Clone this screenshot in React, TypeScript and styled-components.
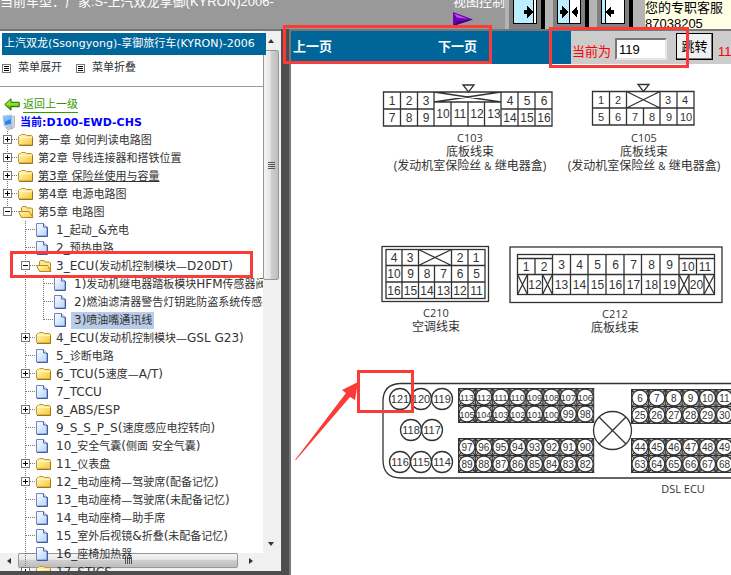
import React from "react";
import styled, { createGlobalStyle } from "styled-components";

const UI_FONT = `"Liberation Sans", "Noto Sans CJK SC", sans-serif`;
const TREE_FONT = `"DejaVu Sans", "Noto Sans CJK SC", sans-serif`;
const RED = "#fb3b37";

const GlobalStyle = createGlobalStyle`
  * { box-sizing: border-box; }
  body { margin: 0; overflow: hidden; background: #4d4d4d; font-family: ${UI_FONT}; }
  a { color: inherit; text-decoration: none; }
  button, input { font-family: inherit; }
  svg { display: block; flex: none; }
`;

const Page = styled.div`
  position: relative;
  display: grid;
  grid-template-rows: 29px minmax(0, 1fr);
  height: 100vh;
  overflow: hidden;
`;

/* ---------- top strip ---------- */

const TopBar = styled.header`
  display: flex;
  background: #999;
  color: #fff;
  font-size: 13px;
  line-height: 16px;
  overflow: hidden;
  white-space: nowrap;
`;

const CarModel = styled.div`
  flex: none;
  width: 453px;
  margin-top: -6px;
`;

const ViewControl = styled.div`
  flex: none;
  width: 52px;
  margin-top: -6px;
`;

const ControlLabel = styled.div`
  height: 18px;
`;

const ControlButtons = styled.div`
  display: grid;
  grid-template-columns: 36px 36px 36px;
  column-gap: 8px;
  flex: none;
  width: 140px;
  padding-left: 4px;
  background: #b4b4b4;
`;

const FrameButton = styled.button`
  height: 29px;
  padding: 0 0 5px;
  border: 0;
  border-right: 4px solid #000;
  background: #808080;
  display: flex;
  align-items: flex-end;
  justify-content: center;
`;

const Contact = styled.div`
  flex: 1;
  min-width: 0;
  overflow: hidden;
  background: #ffffe6;
  color: #000;
`;

/* ---------- sidebar ---------- */

const Main = styled.div`
  display: grid;
  grid-template-columns: 281px minmax(0, 1fr);
  column-gap: 8px;
  min-height: 0;
`;

const Sidebar = styled.nav`
  display: grid;
  grid-template-columns: minmax(0, 1fr) 18px;
  grid-template-rows: minmax(0, 1fr) 18px;
  min-height: 0;
  margin-bottom: 4px;
  border-top: 2px solid #777;
  background: #fff;
  font: 11px/18px ${TREE_FONT};
  color: #333;
  overflow: hidden;
`;

const SideContent = styled.div`
  grid-area: 1 / 1 / 3 / 2;
  z-index: 1;
  min-height: 0;
  white-space: nowrap;
`;

const SideTitle = styled.h1`
  width: 264px;
  margin: 2px 0 0 2px;
  padding: 0 2px;
  overflow: hidden;
  background: #069;
  color: #fff;
  font-size: 11px;
  font-weight: normal;
  line-height: 22px;
`;

const MenuTools = styled.div`
  display: flex;
  gap: 14px;
  padding: 4px 2px 9px;
  margin-bottom: 8px;
  border-bottom: 1px solid #999;
`;

const MenuTool = styled.button`
  display: flex;
  align-items: center;
  gap: 7px;
  padding: 0;
  border: 0;
  background: none;
  color: #333;
  font-size: 11px;
  line-height: 18px;
`;

const BackRow = styled.div`
  display: flex;
  align-items: center;
  gap: 3px;
  height: 19px;
  padding-left: 4px;
  color: #390;
`;

const BackLink = styled.a`
  line-height: 15px;
  border-bottom: 1px solid #390;
`;

const CurrentRow = styled.div`
  display: flex;
  align-items: center;
  gap: 4px;
  height: 17px;
  padding-left: 2px;
  color: #00f;
  font-weight: bold;
`;

const Tree = styled.ul`
  margin: 0;
  padding: 0;
  list-style: none;
  overflow: hidden;
`;

const TreeRow = styled.li`
  display: flex;
  height: 18px;
`;

const TreeLabel = styled.a<{ $selected?: boolean; $underlined?: boolean }>`
  height: 17px;
  margin: 1px 0 0 1px;
  padding: 0 2px 0 3px;
  line-height: 17px;
  background: ${(p) => (p.$selected ? "#b8cbe8" : "transparent")};
  text-decoration: ${(p) => (p.$underlined ? "underline" : "none")};
`;

const Latin = styled.span`
  font-size: 12px;
`;

const VScroll = styled.div`
  grid-area: 1 / 2 / 2 / 3;
  display: grid;
  grid-template-rows: 19px 230px minmax(0, 1fr) 19px;
  padding-right: 2px;
  background: #f0f0f0;
`;

const HScroll = styled.div`
  grid-area: 2 / 1 / 3 / 2;
  display: grid;
  grid-template-columns: 18px minmax(0, 1fr) 25px;
  padding-bottom: 3px;
  background: #f0f0f0;
`;

const Corner = styled.div`
  grid-area: 2 / 2 / 3 / 3;
  background: #f0f0f0;
`;

const ScrollArrow = styled.div`
  display: flex;
  align-items: center;
  justify-content: center;
`;

const Thumb = styled.div<{ $vertical?: boolean }>`
  display: flex;
  align-items: center;
  justify-content: center;
  border: 1px solid #979797;
  border-radius: 2px;
  background: linear-gradient(${(p) => (p.$vertical ? "to right" : "to bottom")}, #f4f4f4, #e6e6e6 45%, #cfcfcf 50%, #bdbdbd);
`;

/* ---------- viewer ---------- */

const Viewer = styled.main`
  display: flex;
  flex-direction: column;
  min-height: 0;
  border-left: 2px solid #777;
  border-top: 2px solid #777;
  background: #fff;
`;

const PageBar = styled.div`
  display: flex;
  height: 33px;
  background: #069;
  color: #fff;
  font-size: 13px;
  overflow: hidden;
`;

const PageLinks = styled.div`
  display: flex;
  flex: none;
  width: 280px;
  gap: 106px;
  padding-left: 2px;
  line-height: 31px;
  font-weight: bold;
`;

const JumpForm = styled.form`
  display: flex;
  flex: 1;
  min-width: 0;
  padding: 2px 0 0 1px;
  background: #ccc;
  color: #f00;
  white-space: nowrap;
`;

const JumpLabel = styled.label`
  flex: none;
  width: 43px;
  padding-top: 5px;
  line-height: 27px;
`;

const JumpInput = styled.input`
  flex: none;
  width: 52px;
  height: 22px;
  margin: 5px 9px 0 0;
  padding: 0 2px;
  border: 2px solid;
  border-color: #777 #e6e6e6 #e6e6e6 #777;
  border-radius: 0;
  background: #fff;
  font-size: 13px;
`;

const JumpButton = styled.button`
  flex: none;
  width: 37px;
  height: 27px;
  margin-right: 5px;
  padding: 0 0 3px;
  border: 1px solid #000;
  border-radius: 0;
  background: #f0f0f0;
  box-shadow: inset -1px -1px 0 #777;
  color: #000;
  font-size: 13px;
`;

const PageTotal = styled.span`
  padding-top: 5px;
  line-height: 27px;
`;

const Sheet = styled.div`
  flex: 1;
  min-height: 0;
  overflow: hidden;
`;

/* ---------- markup drawn over the page ---------- */

const Mark = styled.div<{ $x: number; $y: number; $w: number; $h: number }>`
  position: absolute;
  z-index: 2;
  left: ${(p) => p.$x}px;
  top: ${(p) => p.$y}px;
  width: ${(p) => p.$w}px;
  height: ${(p) => p.$h}px;
  border: 3px solid ${RED};
  pointer-events: none;
`;

const MarkArrow = styled.svg`
  position: absolute;
  z-index: 2;
  left: 294px;
  top: 380px;
  pointer-events: none;
`;

/* ---------- icons ---------- */

const ListIcon = () => (
  <svg width="9" height="9" viewBox="0 0 9 9" shapeRendering="crispEdges">
    <rect x=".5" y=".5" width="8" height="8" fill="#fff" stroke="#777" />
    <path d="M2 2.5h5M2 4.5h5M2 6.5h5" stroke="#000" />
  </svg>
);

const BackIcon = () => (
  <svg width="16" height="13" viewBox="0 0 16 13">
    <defs>
      <linearGradient id="back" x1="0" y1="0" x2="0" y2="1">
        <stop offset="0" stopColor="#c6f03a" />
        <stop offset=".5" stopColor="#8be01c" />
        <stop offset="1" stopColor="#1f8a00" />
      </linearGradient>
    </defs>
    <path d="M.8 6.5 7 .8v3.5h8.2v4.4H7v3.5Z" fill="url(#back)" stroke="#176800" />
  </svg>
);

const ComputerIcon = () => (
  <svg width="14" height="17" viewBox="0 0 14 17">
    <path d="M9 3l3.5-1v11L9 15Z" fill="#d5dae2" stroke="#8f98a8" strokeWidth=".6" />
    <path d="M1 2l8.5-1 .8 10-8 1Z" fill="#cfe0f5" stroke="#7da0cc" strokeWidth=".6" />
    <path d="M2 3l6.6-.8.6 7.9-6.2.8Z" fill="#2f80e6" />
    <path d="M2 3l6.6-.8.2 2.6L2.4 8Z" fill="#7cc0ff" />
    <path d="M3.5 13.5l5-1.5 2.5 2-5 2Z" fill="#c9cfd8" stroke="#8f98a8" strokeWidth=".6" />
  </svg>
);

const Folder = ({ open }: { open?: boolean }) => (
  <svg width="16" height="18" viewBox="0 0 16 18">
    <defs>
      <linearGradient id="fold" x1="0" y1="0" x2="1" y2="1">
        <stop offset="0" stopColor="#fffbd0" />
        <stop offset="1" stopColor="#f6c62c" />
      </linearGradient>
    </defs>
    {open ? (
      <>
        <path d="M3.5 14V4.5l1-1h3.5l1 1.5h4.5l1 1V13Z" fill="#fbe88c" stroke="#b98a1c" />
        <path d="M3.5 14.5.5 8.5h11l3.5 6Z" fill="url(#fold)" stroke="#b98a1c" />
      </>
    ) : (
      <>
        <path d="M.5 13V5.5l1-1h1l1-1h4l1 1h5l1 1V14h-13Z" fill="url(#fold)" stroke="#c0952b" />
        <path d="M1.5 6.5h12" stroke="#fff8bf" />
        <path d="M1 14.5h13.5V7" fill="none" stroke="#9a7420" />
      </>
    )}
  </svg>
);

const FilePage = () => (
  <svg width="16" height="18" viewBox="0 0 16 18">
    <defs>
      <linearGradient id="sheet" x1="0" y1="0" x2="1" y2="1">
        <stop offset="0" stopColor="#fff" />
        <stop offset="1" stopColor="#b4d2fa" />
      </linearGradient>
    </defs>
    <path d="M.5 2.5h7l3.5 3.5v9H.5Z" fill="url(#sheet)" stroke="#6c88c4" />
    <path d="M7.5 2.5V6H11" fill="#e6f0ff" stroke="#4b66b0" />
    <path d="M1 15.5h10.5V6" fill="none" stroke="#44589c" />
  </svg>
);

type Guide = "none" | "line" | "tee" | "elbow" | "plus" | "minus" | "minusEnd";

const GuideCell = ({ kind }: { kind: Guide }) => {
  const box = kind === "plus" || kind === "minus" || kind === "minusEnd";
  const ends = kind === "elbow" || kind === "minusEnd";
  return (
    <svg width="18" height="18" viewBox="0 0 18 18" shapeRendering="crispEdges">
      {kind !== "none" && <path d={`M7.5 0V${ends ? 9 : 18}`} stroke="#777" strokeDasharray="1 1" />}
      {kind !== "none" && kind !== "line" && <path d="M8 8.5H18" stroke="#777" strokeDasharray="1 1" />}
      {box && <rect x="3.5" y="4.5" width="8" height="8" fill="#fff" stroke="#777" />}
      {box && <path d="M5 8.5h5" stroke="#000" />}
      {kind === "plus" && <path d="M7.5 6v5" stroke="#000" />}
    </svg>
  );
};

const Caret = ({ d }: { d: string }) => (
  <svg width="8" height="8" viewBox="0 0 8 8">
    <path d={d} fill="#333" />
  </svg>
);

const Grip = ({ d }: { d: string }) => (
  <svg width="9" height="9" viewBox="0 0 9 9" shapeRendering="crispEdges">
    <path d={d} stroke="#555" />
  </svg>
);

const FrameIcon = ({ side }: { side: "left" | "both" | "right" }) => (
  <svg width="24" height="24" viewBox="0 0 24 24" shapeRendering="crispEdges">
    <rect x=".5" y="-2" width="23" height="25.5" fill="#fff" stroke="#000" />
    {side === "left" && (
      <>
        <path d="M1 0h19v23H1Z" fill="#bdeeff" />
        <path d="M20.5 0v23" stroke="#000" />
        <path d="M11 10h3V6l6 6-6 6v-4h-3Z" fill="#000" />
      </>
    )}
    {side === "both" && (
      <>
        <path d="M1 0h11v23H1Z" fill="#bdeeff" />
        <path d="M12.5 0v23" stroke="#000" />
        <path d="M3 10h2V6l6 6-6 6v-4H3Zm18 0h-1V6l-6 6 6 6v-4h1Z" fill="#000" />
      </>
    )}
    {side === "right" && (
      <>
        <path d="M1 0h3v23H1Z" fill="#bdeeff" />
        <path d="M4.5 0v23" stroke="#000" />
        <path d="M13 10h-3V6l-5 6 5 6v-4h3Z" fill="#000" />
      </>
    )}
  </svg>
);

const PurpleArrow = () => (
  <svg width="20" height="15" viewBox="0 0 20 15">
    <path d="M0 0 20 7.5 0 14Z" fill="#6f00b4" />
    <path d="M1 1.5 15 7 4 5.5Z" fill="#b45ce8" />
    <path d="M0 14 20 7.5 4 9.5Z" fill="#43007c" />
  </svg>
);

/* ---------- tree data ---------- */

type Node = {
  text: string;
  guides: Guide[];
  icon: "folder" | "open" | "page";
  selected?: boolean;
  underlined?: boolean;
};

const nodes: Node[] = [
  { text: "第一章 如何判读电路图", guides: ["plus"], icon: "folder" },
  { text: "第2章 导线连接器和搭铁位置", guides: ["plus"], icon: "folder" },
  { text: "第3章 保险丝使用与容量", guides: ["plus"], icon: "folder", underlined: true },
  { text: "第4章 电源电路图", guides: ["plus"], icon: "folder" },
  { text: "第5章 电路图", guides: ["minusEnd"], icon: "open" },
  { text: "1_起动_&充电", guides: ["none", "tee"], icon: "page" },
  { text: "2_预热电路", guides: ["none", "tee"], icon: "page" },
  { text: "3_ECU(发动机控制模块—D20DT)", guides: ["none", "minus"], icon: "open" },
  { text: "1)发动机继电器踏板模块HFM传感器阀", guides: ["none", "line", "tee"], icon: "page" },
  { text: "2)燃油滤清器警告灯钥匙防盗系统传感器", guides: ["none", "line", "tee"], icon: "page" },
  { text: "3)喷油嘴通讯线", guides: ["none", "line", "elbow"], icon: "page", selected: true },
  { text: "4_ECU(发动机控制模块—GSL G23)", guides: ["none", "plus"], icon: "folder" },
  { text: "5_诊断电路", guides: ["none", "tee"], icon: "page" },
  { text: "6_TCU(5速度—A/T)", guides: ["none", "plus"], icon: "folder" },
  { text: "7_TCCU", guides: ["none", "tee"], icon: "page" },
  { text: "8_ABS/ESP", guides: ["none", "plus"], icon: "folder" },
  { text: "9_S_S_P_S(速度感应电控转向)", guides: ["none", "tee"], icon: "page" },
  { text: "10_安全气囊(侧面 安全气囊)", guides: ["none", "tee"], icon: "page" },
  { text: "11_仪表盘", guides: ["none", "plus"], icon: "folder" },
  { text: "12_电动座椅—驾驶席(配备记忆)", guides: ["none", "plus"], icon: "folder" },
  { text: "13_电动座椅—驾驶席(未配备记忆)", guides: ["none", "tee"], icon: "page" },
  { text: "14_电动座椅—助手席", guides: ["none", "tee"], icon: "page" },
  { text: "15_室外后视镜&折叠(未配备记忆)", guides: ["none", "tee"], icon: "page" },
  { text: "16_座椅加热器", guides: ["none", "tee"], icon: "page" },
  { text: "17_STICS", guides: ["none", "plus"], icon: "folder" },
];

/* Latin runs are set one size larger than the Chinese ones. */
const Mixed = ({ text }: { text: string }) => (
  <>
    {text.split(/([\x20-\x7e]+)/).map((part, i) =>
      i % 2 ? <Latin key={i}>{part}</Latin> : part
    )}
  </>
);

/* ---------- wiring sheet ---------- */

const Drawing = styled.svg`
  fill: none;
  stroke: #333;
  text { fill: #333; stroke: none; text-anchor: middle; font-family: "Liberation Sans", sans-serif; }
`;

const CaptionText = styled.text`
  && { font-family: "Open Sans", "Noto Sans CJK SC", sans-serif; }
`;

type Pin = [number, number, number | string];

const Pins = ({ items, size = 12 }: { items: Pin[]; size?: number }) => (
  <>
    {items.map(([x, y, n]) => (
      <text key={n} x={x} y={y} fontSize={size}>{n}</text>
    ))}
  </>
);

const row = (labels: number[], x: number, step: number, y: number): Pin[] =>
  labels.map((n, i) => [x + step * i, y, n]);

const range = (from: number, to: number) =>
  Array.from({ length: Math.abs(to - from) + 1 }, (_, i) => (from < to ? from + i : from - i));

const Caption = ({ x, y, lines }: { x: number; y: number; lines: string[] }) => (
  <g>
    {lines.map((line, i) => (
      <CaptionText key={line} x={x} y={y + i * 14} fontSize={i === 0 ? 11 : 12}>
        {line.split("&").map((part, j) => (
          <React.Fragment key={j}>
            {j > 0 && <tspan fontSize="10">&amp;</tspan>}
            {part}
          </React.Fragment>
        ))}
      </CaptionText>
    ))}
  </g>
);

const Bank = ({ x, y, rows }: { x: number; y: number; rows: number[][] }) => {
  const s = 16.9;
  return (
    <g>
      <rect x={x} y={y} width={s * rows[0].length} height={34} fill="#a8a8a8" />
      {rows[0].map((n, i) => (
        <path
          key={n}
          d={`M${x + s * i} ${y}v34M${x + s * i} ${y}l${s} 17l${-s} 17M${x + s * (i + 1)} ${y}l${-s} 17l${s} 17M${x + s * i} ${y}l${s} 34m0-34l${-s} 34`}
        />
      ))}
      <path d={`M${x} ${y + 17}h${s * rows[0].length}`} />
      {rows.map((r, j) =>
        r.map((n, i) => (
          <g key={n}>
            <circle cx={x + s * (i + 0.5)} cy={y + 8.5 + j * 17} r="8" fill="#fff" strokeWidth="1.3" />
            <text x={x + s * (i + 0.5)} y={y + 12 + j * 17} fontSize={n > 99 ? 9 : 10}>{n}</text>
          </g>
        ))
      )}
    </g>
  );
};

const bigPins: Pin[] = [
  [400, 399, 121], [421, 399, 120], [442, 399, 119],
  [411, 430, 118], [432, 430, 117],
  [400, 462, 116], [421, 462, 115], [442, 462, 114],
];

const WiringSheet = () => (
  <Drawing width="440" height="511" viewBox="291 64 440 511" role="img" aria-label="DSL ECU">
    <g strokeWidth="1.3">
      <path d="M383.5 92H552v34H383.5ZM383.5 109H434M501 109h51M400.5 92v34M417.5 92v34M434 92v34M501 92v34M518 92v34M535 92v34M434 102h67M451 102v24M468 102v24M484.5 102v24M434 92l67 10M501 92l-67 10" />
      <path d="M463 85h11l-5.5 7Z" />
      <path d="M592.5 91.5H694V125H592.5ZM592.5 108H694M609.5 91.5V125M626.5 91.5V125M643.5 108v17M660 91.5V125M677 91.5V125M626.5 91.5 660 108M660 91.5 626.5 108" />
      <path d="M638 84.5h11l-5.5 7Z" />
    </g>
    <Pins items={[...row([1, 2, 3], 392, 17, 105), ...row([4, 5, 6], 510, 17, 105), ...row([7, 8, 9], 392, 17, 122), ...row([10, 11, 12, 13], 443, 17, 118), ...row([14, 15, 16], 510, 17, 122)]} />
    <Pins size={11} items={[[601, 104, 1], [618, 104, 2], [668, 104, 3], [685, 104, 4], ...row([5, 6, 7, 8, 9, 10], 601, 17, 121)]} />
    <Caption x={470} y={142} lines={["C103", "底板线束", "(发动机室保险丝 & 继电器盒)"]} />
    <Caption x={644} y={142} lines={["C105", "底板线束", "(发动机室保险丝 & 继电器盒)"]} />

    <g strokeWidth="1.3">
      <rect x="382" y="246.5" width="106.5" height="55" />
      <rect x="386" y="249.5" width="99" height="49" />
      <path d="M386 265.5h99M386 282h99M402 249.5v49M418.5 249.5v49M434.5 265.5v33M451.5 249.5v49M468 249.5v49M418.5 249.5l33 16M451.5 249.5l-33 16" />
      <rect x="510" y="247" width="212" height="55.5" />
      <rect x="517.5" y="254.5" width="197" height="40" />
      <path d="M517.5 274.5h197M517.5 258.5h35M679 258.5h35.5M535 258.5v16M552.5 254.5v40M570.5 254.5v40M588 254.5v40M606 254.5v40M624 254.5v40M641.5 254.5v40M660 254.5v40M679 254.5v40M696.5 258.5v16M527.5 274.5v20M542.5 274.5v20M689 274.5v20M704 274.5v20" />
      <path d="M517.5 274.5l10 20m0-20l-10 20M542.5 274.5l10 20m0-20l-10 20M679 274.5l10 20m0-20l-10 20M704 274.5l10.5 20m0-20l-10.5 20" />
    </g>
    <Pins items={[[394, 262, 4], [410, 262, 3], [460, 262, 2], [476, 262, 1], ...row(range(10, 5), 394, 16.5, 278), ...row(range(16, 11), 394, 16.5, 295)]} />
    <Pins items={[[526, 271, 1], [544, 271, 2], ...row(range(3, 9), 561.5, 18, 269), [688, 271, 10], [705, 271, 11], [535, 289, 12], ...row(range(13, 19), 561.5, 18, 289), [696.5, 289, 20]]} />
    <Caption x={436} y={317} lines={["C210", "空调线束"]} />
    <Caption x={615} y={318} lines={["C212", "底板线束"]} />

    <path d="M760 383.5H400Q383 384.5 383 401v59q0 18 18 18h359" strokeWidth="1.3" />
    {bigPins.map(([x, y]) => (
      <circle key={`${x}-${y}`} cx={x} cy={y} r="10.5" strokeWidth="1.3" />
    ))}
    <Pins items={bigPins.map(([x, y, n]) => [x, y + 4, n] as Pin)} size={11} />
    <Bank x={458.5} y={388.5} rows={[range(113, 106), range(105, 98)]} />
    <Bank x={458.5} y={438.5} rows={[range(97, 90), range(89, 82)]} />
    <Bank x={631.5} y={389.5} rows={[range(6, 11), range(25, 30)]} />
    <Bank x={631.5} y={438.5} rows={[range(44, 49), range(63, 68)]} />
    <g strokeWidth="1.3">
      <circle cx="612.5" cy="430.5" r="19" />
      <path d="M599 417l27 27M626 417l-27 27" />
    </g>
    <Caption x={683} y={493} lines={["DSL ECU"]} />
  </Drawing>
);

export default function App() {
  return (
    <Page>
      <GlobalStyle />
      <TopBar>
        <CarModel>当前车型：厂家:S-上汽双龙享御(KYRON)2006-</CarModel>
        <ViewControl>
          <ControlLabel>视图控制</ControlLabel>
          <PurpleArrow />
        </ViewControl>
        <ControlButtons>
          <FrameButton aria-label="左"><FrameIcon side="left" /></FrameButton>
          <FrameButton aria-label="中"><FrameIcon side="both" /></FrameButton>
          <FrameButton aria-label="右"><FrameIcon side="right" /></FrameButton>
        </ControlButtons>
        <Contact>您的专职客服<br />87038205</Contact>
      </TopBar>

      <Main>
        <Sidebar>
          <SideContent>
            <SideTitle>上汽双龙(Ssongyong)-享御旅行车(KYRON)-2006</SideTitle>
            <MenuTools>
              <MenuTool><ListIcon />菜单展开</MenuTool>
              <MenuTool><ListIcon />菜单折叠</MenuTool>
            </MenuTools>
            <BackRow><BackIcon /><BackLink href="#">返回上一级</BackLink></BackRow>
            <CurrentRow><ComputerIcon />当前:D100-EWD-CHS</CurrentRow>
            <Tree>
              {nodes.map((n) => (
                <TreeRow key={n.text}>
                  {n.guides.map((g, i) => <GuideCell key={i} kind={g} />)}
                  {n.icon === "page" ? <FilePage /> : <Folder open={n.icon === "open"} />}
                  <TreeLabel href="#" $selected={n.selected} $underlined={n.underlined}>
                    <Mixed text={n.text} />
                  </TreeLabel>
                </TreeRow>
              ))}
            </Tree>
          </SideContent>
          <VScroll>
            <ScrollArrow><Caret d="M1 6 4 2l3 4Z" /></ScrollArrow>
            <Thumb $vertical><Grip d="M1 1.5h7M1 3.5h7M1 5.5h7M1 7.5h7" /></Thumb>
            <div />
            <ScrollArrow><Caret d="M1 2h6L4 6Z" /></ScrollArrow>
          </VScroll>
          <HScroll>
            <ScrollArrow><Caret d="M6 1v6L2 4Z" /></ScrollArrow>
            <Thumb><Grip d="M1.5 1v7M3.5 1v7M5.5 1v7M7.5 1v7" /></Thumb>
            <ScrollArrow><Caret d="M2 1v6l4-3Z" /></ScrollArrow>
          </HScroll>
          <Corner />
        </Sidebar>

        <Viewer>
          <PageBar>
            <PageLinks>
              <a href="#">上一页</a>
              <a href="#">下一页</a>
            </PageLinks>
            <JumpForm onSubmit={(e) => e.preventDefault()}>
              <JumpLabel htmlFor="page">当前为</JumpLabel>
              <JumpInput id="page" defaultValue="119" />
              <JumpButton type="submit">跳转</JumpButton>
              <PageTotal>119</PageTotal>
            </JumpForm>
          </PageBar>
          <Sheet><WiringSheet /></Sheet>
        </Viewer>
      </Main>

      <Mark $x={283} $y={25} $w={209} $h={39} />
      <Mark $x={549} $y={27} $w={140} $h={41} />
      <Mark $x={10} $y={251} $w={243} $h={27} />
      <Mark $x={357} $y={370} $w={57} $h={43} />
      <MarkArrow width="66" height="82" viewBox="294 380 66 82">
        <path d="M295 460 346 393l-4-3 16-8-3 18-5-3-54 63Z" fill={RED} />
      </MarkArrow>
    </Page>
  );
}
